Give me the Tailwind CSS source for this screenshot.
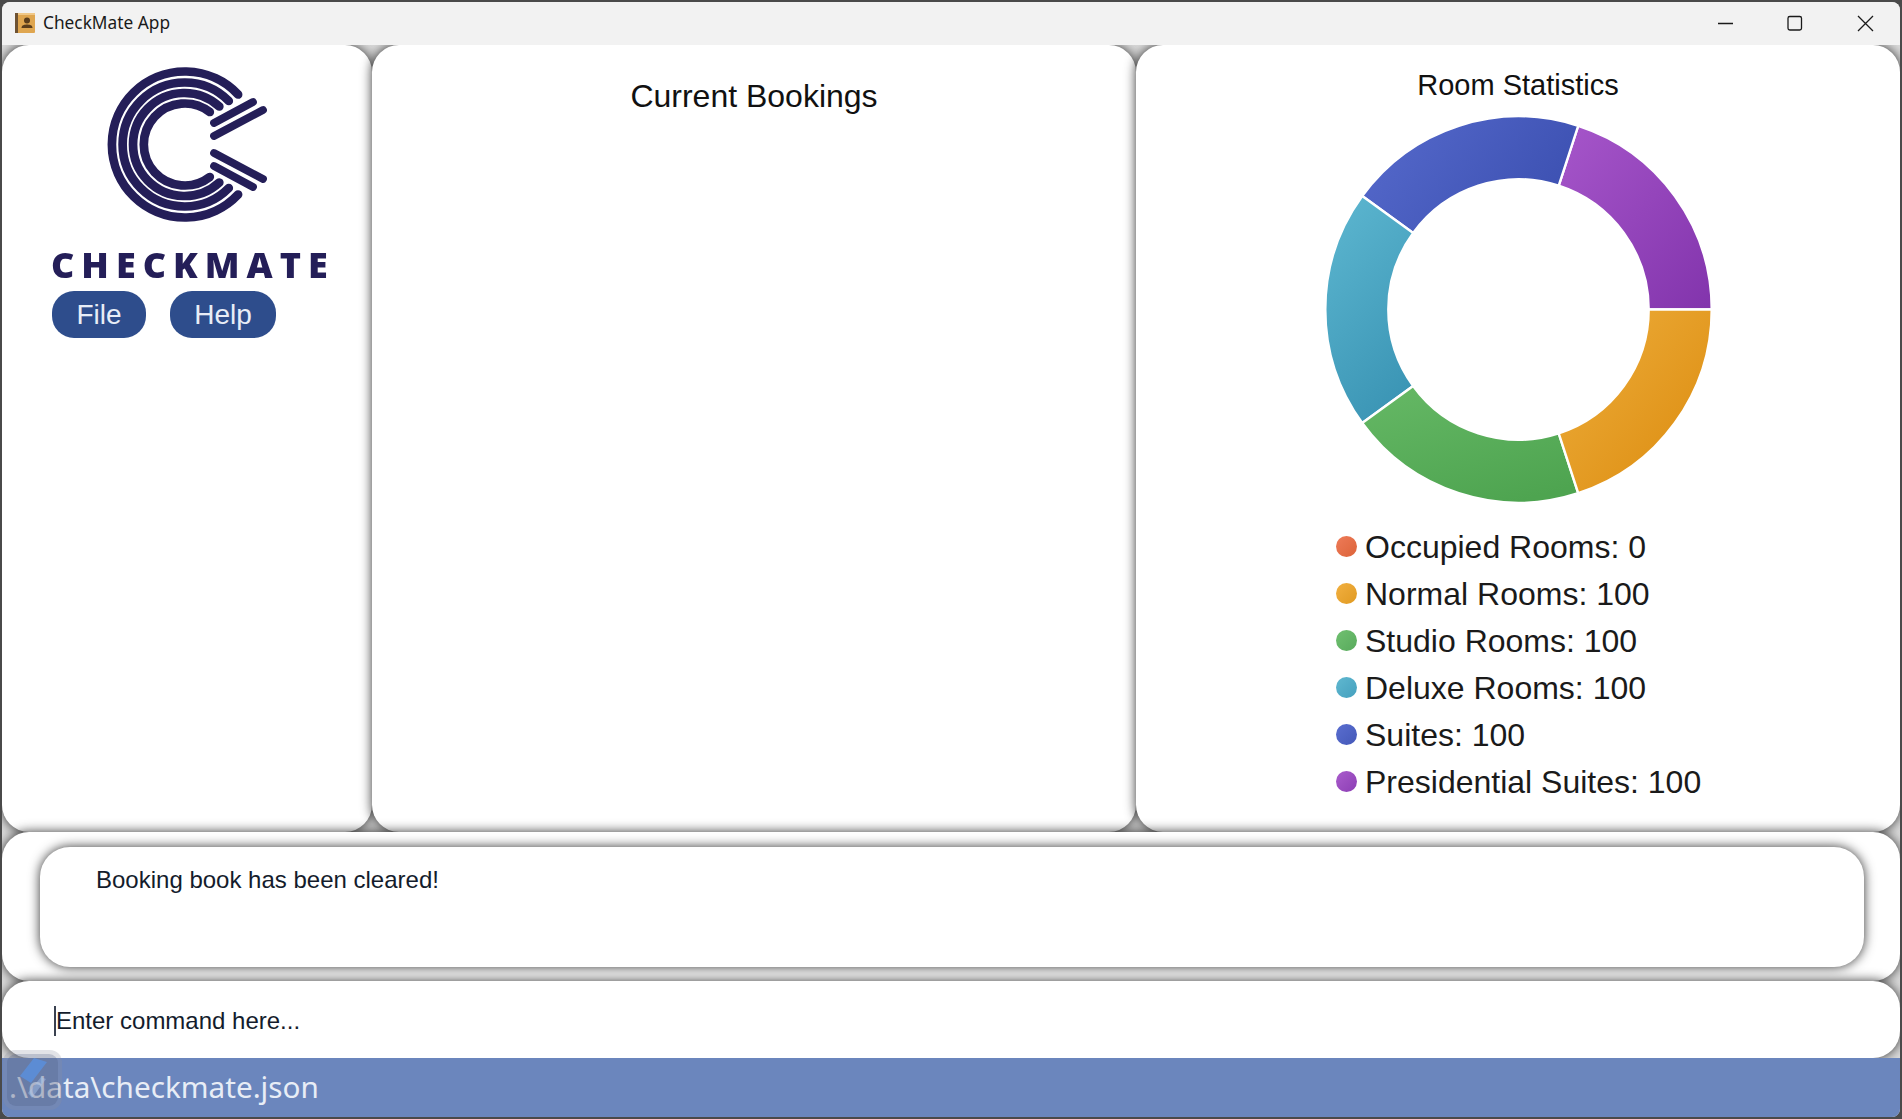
<!DOCTYPE html>
<html lang="en">
<head>
    <meta charset="UTF-8">
    <title>CheckMate App</title>
    <script src="https://cdn.jsdelivr.net/npm/@tailwindcss/browser@4"></script>
</head>
<body class="bg-[#4a4a4a] h-screen overflow-hidden pt-[2px] px-[2px] font-['Liberation_Sans',Arial,sans-serif]">
    <div class="relative h-[1115px] flex flex-col overflow-hidden rounded-[8px] bg-[#dcdcdc]">

        <!-- title bar -->
        <header class="relative z-10 h-[43px] shrink-0 flex items-center pb-[2px] bg-[#f2f2f2] text-[#1a1a1a]">
            <svg class="ml-[12px] w-[22px] h-[22px]" viewBox="0 0 22 22">
                <rect x="1" y="1" width="20" height="20" rx="1" fill="#dfa650"/>
                <rect x="1" y="1" width="3" height="20" fill="#6e5232"/>
                <path d="M4 1h17v2H4z" fill="#f0c888"/>
                <circle cx="13" cy="8.500" r="3" fill="#5a3d1c"/>
                <path d="M7.500 16c0-3 3-3.500 5.500-3.500s5.500.5 5.500 3.500z" fill="#5a3d1c"/>
            </svg>
            <span class="ml-[7px] text-[17.300px] font-['Noto_Sans',sans-serif]">CheckMate App</span>
            <svg class="ml-auto mr-[24px] w-[158px] h-[20px]" viewBox="0 0 158 20" fill="none" stroke="#1a1a1a" stroke-width="1.300">
                <path d="M0 10.500h15"/>
                <rect x="70" y="3.500" width="13.500" height="13.500" rx="1.800"/>
                <path d="M140 3l15 15M155 3l-15 15"/>
            </svg>
        </header>

        <!-- main panels -->
        <div class="h-[787px] shrink-0 flex">
            <aside class="w-[370px] shrink-0 bg-white rounded-[27px] shadow-[0_0_12px_rgba(0,0,0,0.8)]">
                <svg class="ml-[100px] mt-[16px] w-[170px] h-[165px] blur-[0.4px]" viewBox="100 61 170 165" fill="none" stroke="#241e58" stroke-linecap="round">
                    <g stroke-width="8.700" transform="translate(0.800 0)">
                        <path d="M235.300 94.500A73 73 0 1 0 235.300 194.500"/>
                        <path d="M226 101A62 62 0 1 0 226 188"/>
                        <path d="M216.500 106.500A51.500 51.500 0 1 0 216.500 182.500"/>
                        <path d="M207 112A41 41 0 1 0 207 177"/>
                    </g>
                    <g stroke-width="7.800">
                        <path d="M212 123L251 102"/>
                        <path d="M212 136L261 110"/>
                        <path d="M212 153L261 179"/>
                        <path d="M212 166L251 187"/>
                    </g>
                </svg>
                <div class="ml-[49px] mt-[17px] h-[44px] text-[36px] leading-[44px] font-extrabold tracking-[7px] text-[#241e58] font-['Open_Sans',sans-serif] blur-[0.5px] whitespace-nowrap">CHECKMATE</div>
                <nav class="ml-[50px] mt-[4px] flex gap-[24px] text-[28px] leading-[47px] text-[#e8edf7]">
                    <span class="w-[94px] text-center rounded-[22px] bg-[#2e4d8c]">File</span>
                    <span class="w-[106px] text-center rounded-[22px] bg-[#2e4d8c]">Help</span>
                </nav>
            </aside>

            <section class="w-[764px] shrink-0 bg-white rounded-[27px] shadow-[0_0_12px_rgba(0,0,0,0.8)] pt-[33px] text-center text-[32px] leading-[37px] text-[#111]">
                Current Bookings
            </section>

            <section class="flex-1 bg-white rounded-[27px] shadow-[0_0_12px_rgba(0,0,0,0.8)] pt-[24px] flex flex-col">
                <h2 class="text-center text-[29px] leading-[33px] text-[#111]">Room Statistics</h2>
                <svg class="self-center mt-[14px] w-[388px] h-[388px]" viewBox="-194.500 -193.500 388 388" stroke="#fff" stroke-width="2.400">
                    <defs>
                        <linearGradient id="purple" x1="0" y1="0" x2="1" y2="1">
                            <stop offset="0" stop-color="#a656ca"/><stop offset="1" stop-color="#8234ac"/>
                        </linearGradient>
                        <linearGradient id="indigo" x1="0" y1="0.3" x2="1" y2="0.7">
                            <stop offset="0" stop-color="#5468ca"/><stop offset="1" stop-color="#3b4fb0"/>
                        </linearGradient>
                        <linearGradient id="teal" x1="0.3" y1="0" x2="0.7" y2="1">
                            <stop offset="0" stop-color="#5ab4ce"/><stop offset="1" stop-color="#3a94b4"/>
                        </linearGradient>
                        <linearGradient id="green" x1="0.2" y1="0" x2="0.7" y2="1">
                            <stop offset="0" stop-color="#64b764"/><stop offset="1" stop-color="#4ea450"/>
                        </linearGradient>
                        <linearGradient id="orange" x1="0.2" y1="0.2" x2="0.9" y2="0.9">
                            <stop offset="0" stop-color="#eaa733"/><stop offset="1" stop-color="#dd8e12"/>
                        </linearGradient>
                    </defs>
                    <path fill="url(#purple)" d="M193.200 0A193.200 193.200 0 0 0 59.700 -183.740L40.230 -123.830A130.200 130.200 0 0 1 130.200 0Z"/>
                    <path fill="url(#indigo)" d="M59.700 -183.740A193.200 193.200 0 0 0 -156.300 -113.560L-105.330 -76.530A130.200 130.200 0 0 1 40.230 -123.830Z"/>
                    <path fill="url(#teal)" d="M-156.300 -113.560A193.200 193.200 0 0 0 -156.300 113.560L-105.330 76.530A130.200 130.200 0 0 1 -105.330 -76.530Z"/>
                    <path fill="url(#green)" d="M-156.300 113.560A193.200 193.200 0 0 0 59.700 183.740L40.230 123.830A130.200 130.200 0 0 1 -105.330 76.530Z"/>
                    <path fill="url(#orange)" d="M59.700 183.740A193.200 193.200 0 0 0 193.200 0L130.200 0A130.200 130.200 0 0 1 40.230 123.830Z"/>
                </svg>
                <ul class="ml-[200px] mt-[19.500px] text-[32px] leading-[47px] text-[#1a1a1a] whitespace-nowrap">
                    <li class="flex items-center gap-[8px]"><span class="w-[21px] h-[21px] -mt-[2px] rounded-full bg-gradient-to-br from-[#ee7b58] to-[#dc6339]"></span>Occupied Rooms: 0</li>
                    <li class="flex items-center gap-[8px]"><span class="w-[21px] h-[21px] -mt-[2px] rounded-full bg-gradient-to-br from-[#f2b040] to-[#e09a20]"></span>Normal Rooms: 100</li>
                    <li class="flex items-center gap-[8px]"><span class="w-[21px] h-[21px] -mt-[2px] rounded-full bg-gradient-to-br from-[#70c070] to-[#58aa5c]"></span>Studio Rooms: 100</li>
                    <li class="flex items-center gap-[8px]"><span class="w-[21px] h-[21px] -mt-[2px] rounded-full bg-gradient-to-br from-[#60b8d0] to-[#44a0be]"></span>Deluxe Rooms: 100</li>
                    <li class="flex items-center gap-[8px]"><span class="w-[21px] h-[21px] -mt-[2px] rounded-full bg-gradient-to-br from-[#5a6ed0] to-[#4458b8]"></span>Suites: 100</li>
                    <li class="flex items-center gap-[8px]"><span class="w-[21px] h-[21px] -mt-[2px] rounded-full bg-gradient-to-br from-[#aa5ccc] to-[#8c3eb4]"></span>Presidential Suites: 100</li>
                </ul>
            </section>
        </div>

        <!-- result display -->
        <div class="h-[149px] shrink-0 bg-white rounded-[27px] shadow-[0_0_12px_rgba(0,0,0,0.8)] px-[38px] pt-[15px]">
            <div class="w-[1824px] h-[120px] bg-white rounded-[30px] shadow-[0_0_12px_rgba(0,0,0,0.8)] pl-[56px] pt-[19px] text-[24px] leading-[28px] text-[#141c2c]">
                Booking book has been cleared!
            </div>
        </div>

        <!-- command box -->
        <div class="h-[77px] shrink-0 bg-white rounded-[27px] shadow-[0_0_12px_rgba(0,0,0,0.8)] pl-[52px] pt-[25px]">
            <span class="inline-block border-l-[2px] border-[#3a4150] text-[24px] leading-[30px] text-[#141c2c]">Enter command here...</span>
        </div>

        <!-- status bar -->
        <footer class="relative z-10 flex-1 flex items-center pl-[7px] bg-[#6b86bd] text-[#e8edf6] text-[29.700px] font-['Noto_Sans',sans-serif]">
            .\data\checkmate.json
        </footer>

        <!-- floating tool badge -->
        <div class="absolute z-20 left-[1px] top-[1048px] w-[59px] h-[60px] p-[4px] rounded-[12px] bg-[#8a8f9e]/25">
            <div class="w-full h-full rounded-[9px] bg-[#46577f]/25">
                <svg class="w-full h-full" viewBox="0 0 51 52">
                    <path d="M27 4l13 4-16 21-11-7z" fill="#5a8fdc" opacity="0.85"/>
                    <path d="M34 23l5 2-14 19-4-5z" fill="#a9c6ee" opacity="0.45"/>
                </svg>
            </div>
        </div>
    </div>
</body>
</html>
